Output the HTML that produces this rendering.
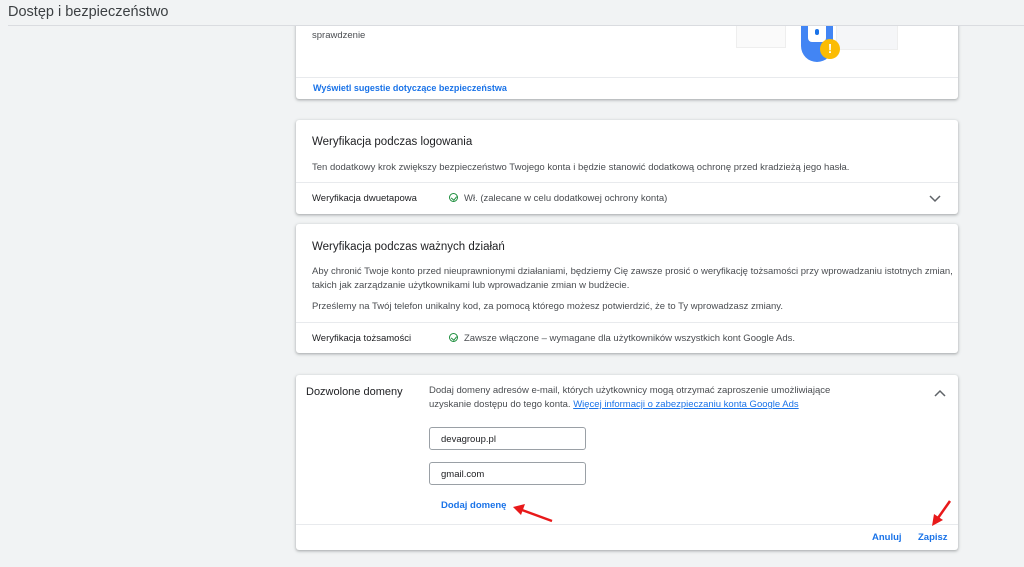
<!DOCTYPE html>
<html><head><meta charset="utf-8"><style>
*{box-sizing:border-box;margin:0;padding:0}
body{width:1024px;height:567px;overflow:hidden;background:#f1f3f4;font-family:"Liberation Sans",sans-serif;color:#3c4043;position:relative}
.hdr{position:absolute;left:0;top:0;width:1024px;height:26px;background:#f1f3f4;z-index:5}
.hdr h1{position:absolute;left:8px;top:4px;font-size:14.5px;font-weight:normal;color:#3c4043}
.hdr .ln{position:absolute;left:8px;right:0;top:25px;height:1px;background:#dadce0}
.card{position:absolute;left:296px;width:662px;background:#fff;border-radius:3px;box-shadow:0 1px 2px rgba(60,64,67,.3),0 1px 3px 1px rgba(60,64,67,.12)}
.t{position:absolute;font-size:11.5px;white-space:nowrap}
.s{font-size:9.5px;color:#4a4d51}
.ttl{font-size:11.5px;color:#202124}
.div{position:absolute;left:0;right:0;height:1px;background:#e8eaed}
.lk{color:#1a73e8}
.chk{display:inline-block;width:9px;height:9px;border:1.3px solid #1e8e3e;border-radius:50%;vertical-align:-1px;margin-right:6px;position:relative}
.chk:after{content:"";position:absolute;left:1.5px;top:0.5px;width:2.5px;height:4px;border:solid #1e8e3e;border-width:0 1.3px 1.3px 0;transform:rotate(40deg)}
.inp{position:absolute;left:133px;width:157px;height:23px;border:1px solid #9aa0a6;border-radius:3px;font-size:9.5px;color:#202124;padding:6px 0 0 11px}
</style></head><body>
<div class="hdr"><h1>Dostęp i bezpieczeństwo</h1><div class="ln"></div></div>

<div class="card" style="top:10px;height:89px">
  <div class="t s" style="left:16px;top:20px">sprawdzenie</div>
  <div style="position:absolute;left:440px;top:10px;width:160px;height:30px">
    <div style="position:absolute;left:0;top:0;width:50px;height:28px;border:1px solid #eee;background:#fafafa"></div>
    <div style="position:absolute;left:100px;top:0;width:62px;height:30px;background:#f5f6f8;border:1px solid #eee"></div>
    <div style="position:absolute;left:65px;top:0;width:32px;height:42px;background:#4285f4;border-radius:0 0 16px 16px"></div>
    <div style="position:absolute;left:72px;top:0;width:18px;height:22px;background:#fff;border-radius:0 0 4px 4px"></div>
    <div style="position:absolute;left:79px;top:9px;width:4px;height:6px;background:#1a73e8;border-radius:2px"></div>
    <div style="position:absolute;left:84px;top:19px;width:20px;height:20px;background:#fbbc04;border-radius:50%;color:#fff;font-size:13px;font-weight:bold;text-align:center;line-height:20px">!</div>
  </div>
  <div class="div" style="top:67px"></div>
  <div class="t lk" style="left:17px;top:73px;font-size:9px;font-weight:bold">Wyświetl sugestie dotyczące bezpieczeństwa</div>
</div>

<div class="card" style="top:120px;height:94px">
  <div class="t ttl" style="left:16px;top:16px">Weryfikacja podczas logowania</div>
  <div class="t s" style="left:16px;top:42px">Ten dodatkowy krok zwiększy bezpieczeństwo Twojego konta i będzie stanowić dodatkową ochronę przed kradzieżą jego hasła.</div>
  <div class="div" style="top:62px"></div>
  <div class="t s" style="left:16px;top:73px;color:#202124">Weryfikacja dwuetapowa</div>
  <div class="t s" style="left:153px;top:73px"><span class="chk"></span>Wł. (zalecane w celu dodatkowej ochrony konta)</div>
  <svg style="position:absolute;left:633px;top:75px" width="12" height="8" viewBox="0 0 12 8"><path d="M1 1l5 5 5-5" fill="none" stroke="#5f6368" stroke-width="1.5"/></svg>
</div>

<div class="card" style="top:224px;height:129px">
  <div class="t ttl" style="left:16px;top:17px">Weryfikacja podczas ważnych działań</div>
  <div class="t s" style="left:16px;top:42px">Aby chronić Twoje konto przed nieuprawnionymi działaniami, będziemy Cię zawsze prosić o weryfikację tożsamości przy wprowadzaniu istotnych zmian,</div>
  <div class="t s" style="left:16px;top:56px">takich jak zarządzanie użytkownikami lub wprowadzanie zmian w budżecie.</div>
  <div class="t s" style="left:16px;top:77px">Prześlemy na Twój telefon unikalny kod, za pomocą którego możesz potwierdzić, że to Ty wprowadzasz zmiany.</div>
  <div class="div" style="top:98px"></div>
  <div class="t s" style="left:16px;top:109px;color:#202124">Weryfikacja tożsamości</div>
  <div class="t s" style="left:153px;top:109px"><span class="chk"></span>Zawsze włączone – wymagane dla użytkowników wszystkich kont Google Ads.</div>
</div>

<div class="card" style="top:375px;height:175px">
  <div class="t" style="left:10px;top:11px;font-size:11px;color:#202124">Dozwolone domeny</div>
  <div class="t s" style="left:133px;top:10px">Dodaj domeny adresów e-mail, których użytkownicy mogą otrzymać zaproszenie umożliwiające</div>
  <div class="t s" style="left:133px;top:24px">uzyskanie dostępu do tego konta. <span class="lk" style="text-decoration:underline">Więcej informacji o zabezpieczaniu konta Google Ads</span></div>
  <svg style="position:absolute;left:638px;top:14px" width="12" height="8" viewBox="0 0 12 8"><path d="M1 7l5-5 5 5" fill="none" stroke="#5f6368" stroke-width="1.5"/></svg>
  <div class="inp" style="top:52px">devagroup.pl</div>
  <div class="inp" style="top:87px">gmail.com</div>
  <div class="t lk" style="left:145px;top:125px;font-size:9.5px;font-weight:bold">Dodaj domenę</div>
  <div class="div" style="top:149px"></div>
  <div class="t lk" style="left:576px;top:157px;font-size:9.5px;font-weight:bold">Anuluj</div>
  <div class="t lk" style="left:622px;top:157px;font-size:9.5px;font-weight:bold">Zapisz</div>
</div>

<svg style="position:absolute;left:0;top:0;z-index:6" width="1024" height="567">
  <line x1="552" y1="521" x2="522" y2="510" stroke="#e8191a" stroke-width="2.5"/>
  <path d="M513 507l12-3-4 11z" fill="#e8191a"/>
  <line x1="950" y1="501" x2="938" y2="518" stroke="#e8191a" stroke-width="2.5"/>
  <path d="M932 526l2-12 9 6z" fill="#e8191a"/>
</svg>
</body></html>
